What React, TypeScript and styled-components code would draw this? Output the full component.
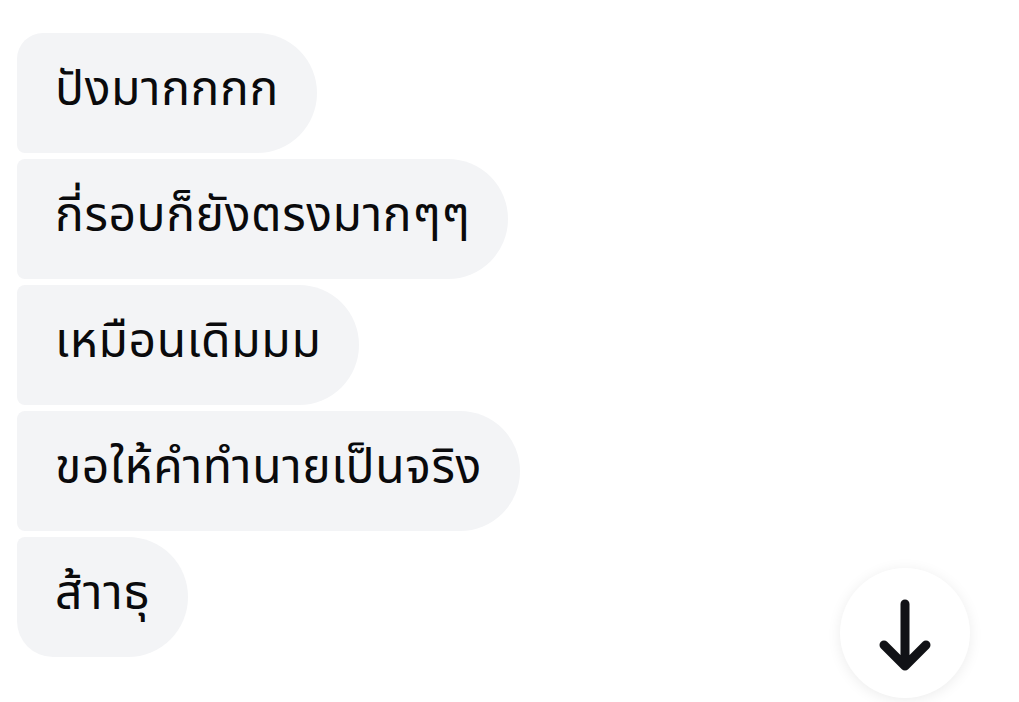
import React from "react";
import styled, { createGlobalStyle } from "styled-components";

const Global = createGlobalStyle`
  html, body { margin: 0; padding: 0; background: #ffffff; }
  body { font-family: "Noto Sans Thai", "Noto Sans", "DejaVu Sans", sans-serif; }
`;

const Page = styled.div`
  position: relative;
  width: 1019px;
  height: 702px;
  overflow: hidden;
  background: #ffffff;
`;

const Thread = styled.div`
  display: flex;
  flex-direction: column;
  align-items: flex-start;
  gap: 6px;
  padding: 33px 0 0 17px;
`;

type Pos = "first" | "middle" | "last";

const Bubble = styled.div<{ $pos: Pos }>`
  box-sizing: border-box;
  height: 120px;
  display: flex;
  align-items: center;
  padding: 0 38px 4px;
  background: #f3f4f6;
  color: #0a0a0c;
  font-family: "Noto Sans Thai", "Noto Sans", sans-serif;
  font-size: 48px;
  letter-spacing: 0.6px;
  line-height: 1;
  white-space: nowrap;
  border-radius: ${({ $pos }) =>
    $pos === "first"
      ? "26px 60px 60px 8px"
      : $pos === "last"
      ? "8px 60px 60px 36px"
      : "8px 60px 60px 8px"};
`;

const ScrollButton = styled.button`
  position: absolute;
  left: 840px;
  top: 568px;
  width: 130px;
  height: 130px;
  border-radius: 50%;
  border: none;
  background: #ffffff;
  box-shadow: 0 2px 14px rgba(0, 0, 0, 0.08);
  display: flex;
  align-items: center;
  justify-content: center;
  padding: 0;
`;

const messages = [
  "ปังมากกกก",
  "กี่รอบก็ยังตรงมากๆๆ",
  "เหมือนเดิมมม",
  "ขอให้คำทำนายเป็นจริง",
  "ส้าาธุ",
];

export default function App() {
  return (
    <Page>
      <Global />
      <Thread>
        {messages.map((m, i) => (
          <Bubble
            key={i}
            $pos={i === 0 ? "first" : i === messages.length - 1 ? "last" : "middle"}
          >
            {m}
          </Bubble>
        ))}
      </Thread>
      <ScrollButton aria-label="Scroll to bottom">
        <svg width="60" height="80" viewBox="0 0 60 80" fill="none">
          <path
            d="M30 11 V73 M9 52 L30 73 L51 52"
            stroke="#111216"
            strokeWidth="9"
            strokeLinecap="round"
            strokeLinejoin="round"
          />
        </svg>
      </ScrollButton>
    </Page>
  );
}
